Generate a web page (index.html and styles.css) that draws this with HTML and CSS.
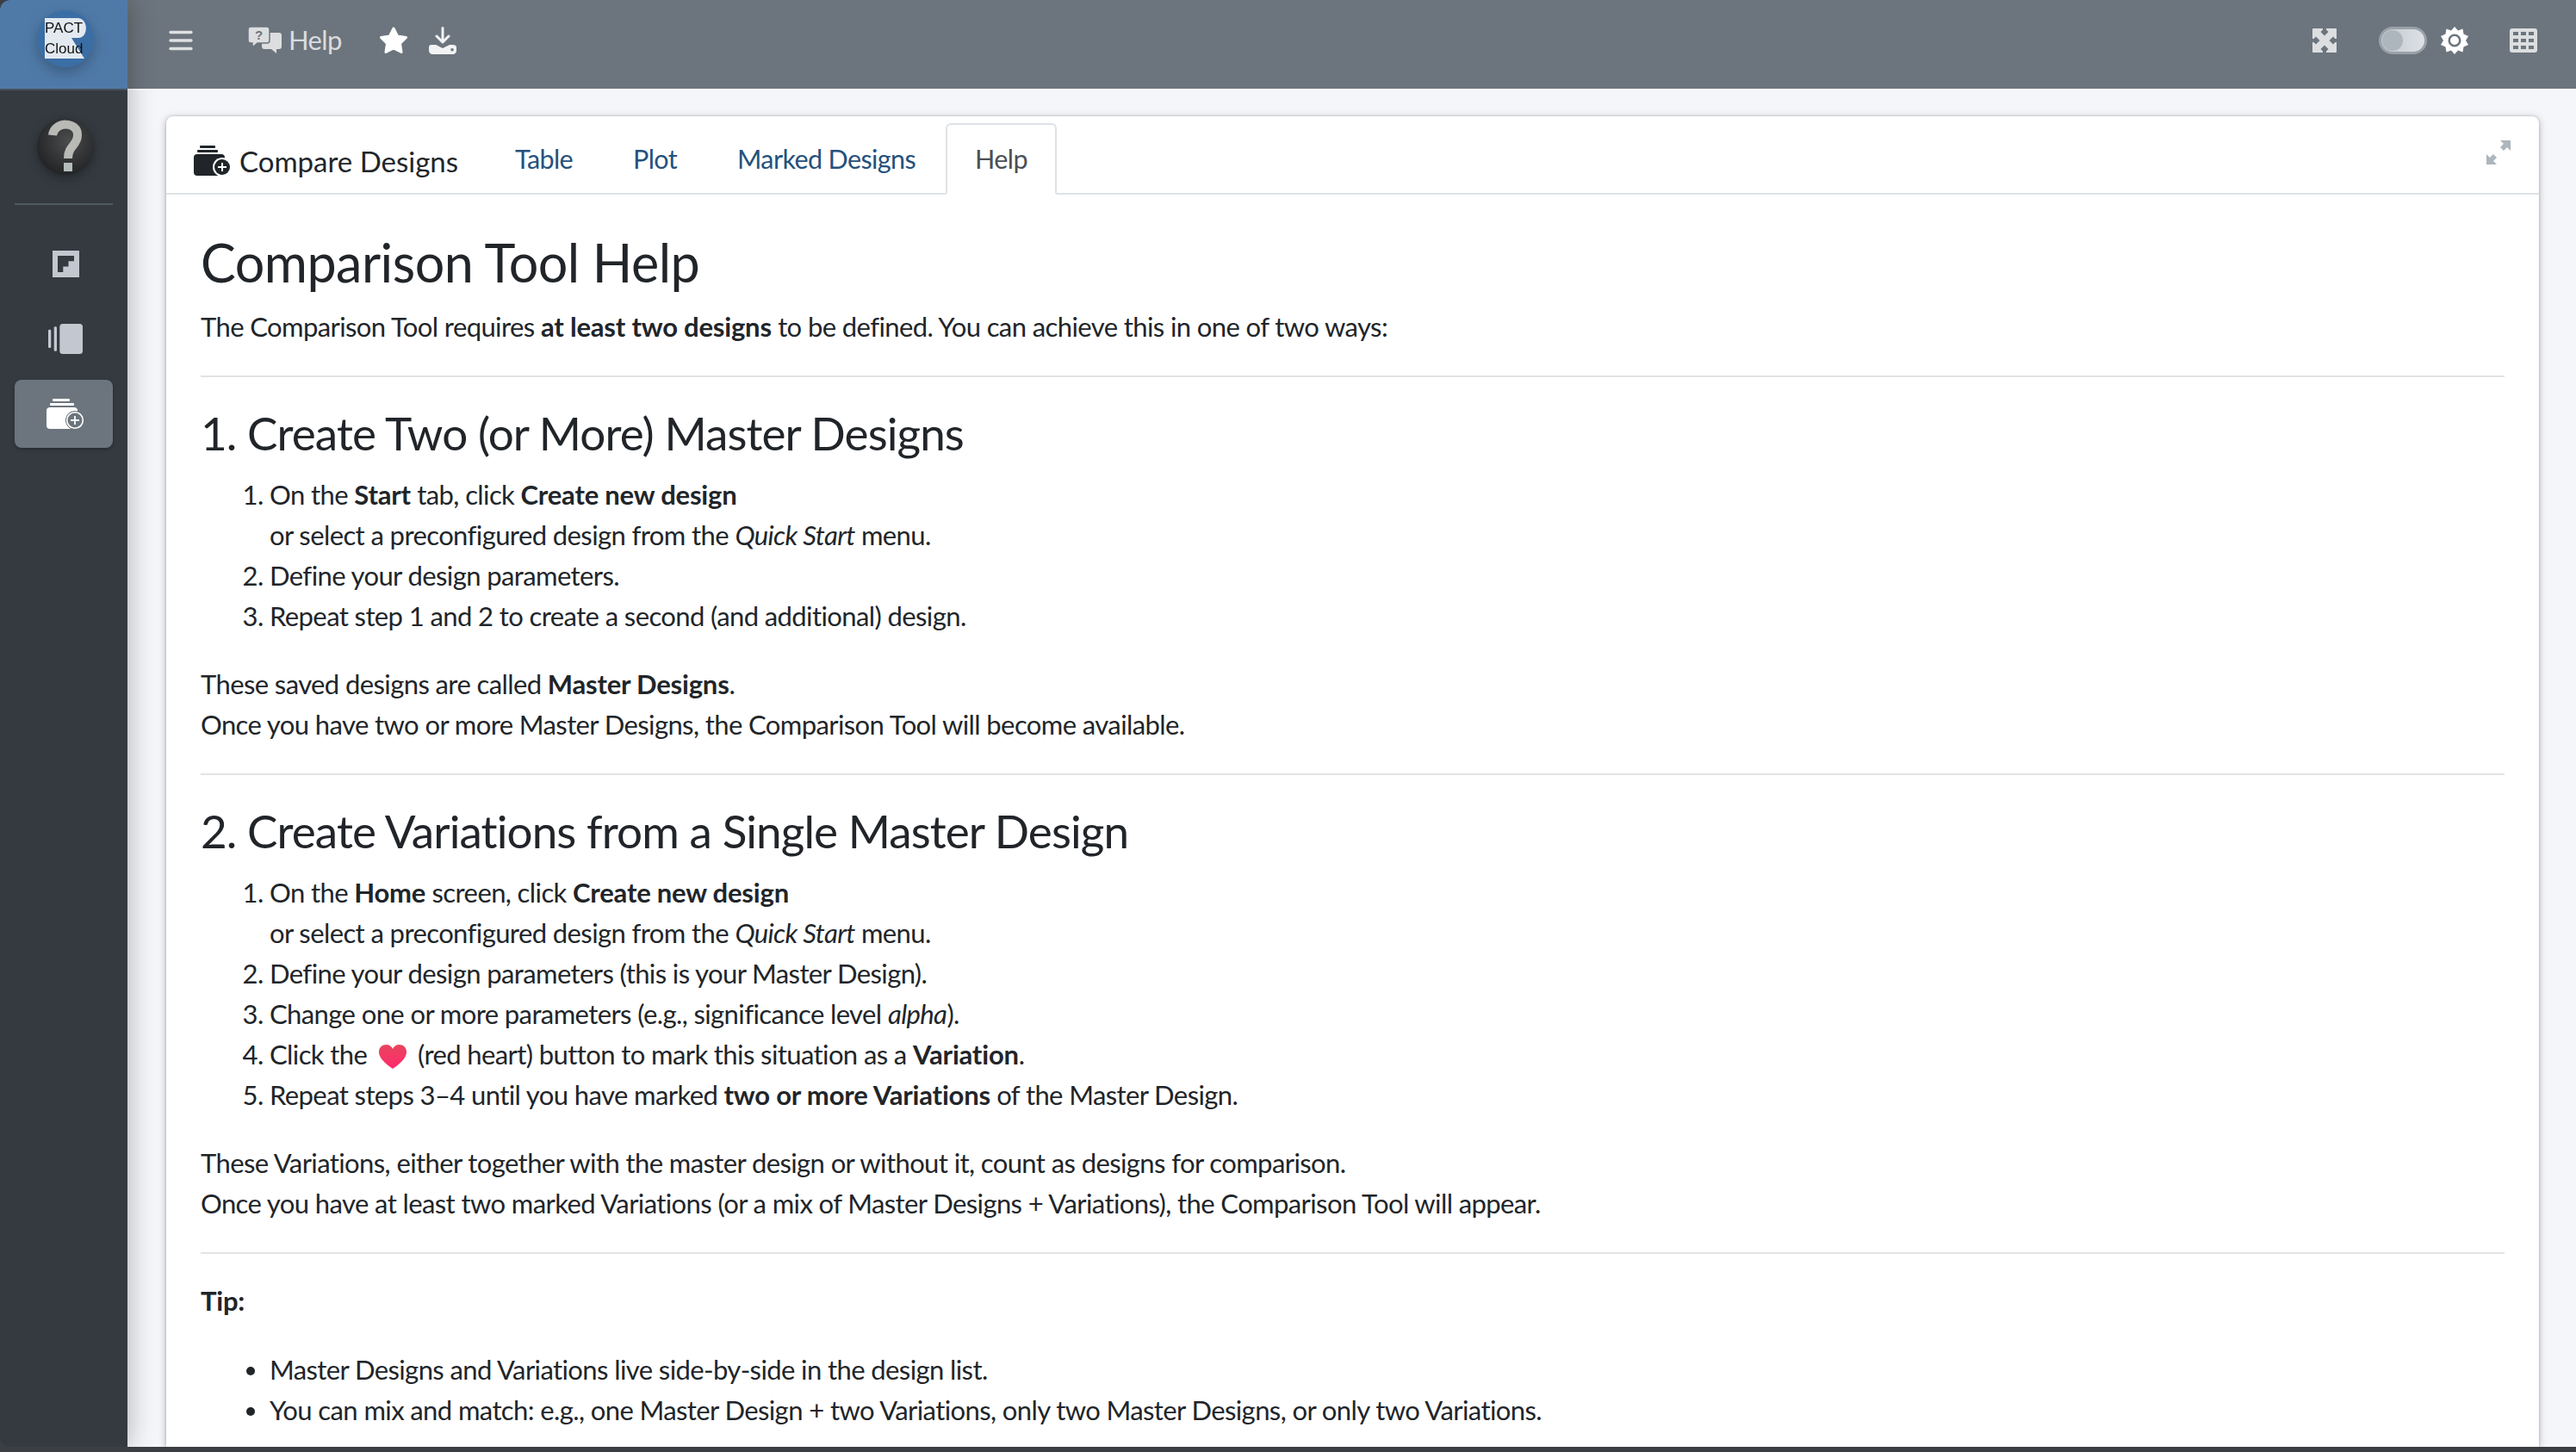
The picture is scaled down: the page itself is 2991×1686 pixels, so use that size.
FILE: index.html
```html
<!DOCTYPE html>
<html lang="en">

<head>
  <meta charset="UTF-8" />
  <title>PACT Cloud - Comparison Tool Help</title>
  <link rel="stylesheet" href="styles.css">
</head>

<body>
  <div class="app">
    <!-- Left sidebar -->
    <aside class="sidebar">
      <div class="brand">
        <svg class="brand-logo" viewBox="0 0 66 66">
          <circle cx="33" cy="33" r="33" fill="#3a6ea5" />
          <path d="M9 9H47C60 9 60 32 48 32H40L55 56H9Z" fill="#e3e9f0" />
          <text x="9" y="26" class="logo-text">PACT</text>
          <text x="9" y="50" class="logo-text">Cloud</text>
        </svg>
      </div>
      <div class="user-panel">
        <svg class="user-image" viewBox="0 0 66 66">
          <defs>
            <radialGradient id="ball" cx="55%" cy="40%" r="65%">
              <stop offset="0" stop-color="#4a4c4e" />
              <stop offset="1" stop-color="#1f2123" />
            </radialGradient>
          </defs>
          <circle cx="33" cy="33" r="33" fill="url(#ball)" />
          <path d="M18 20C20 3 48 4 47 20C47 32 36 32 36 47" fill="none" stroke="#b9b9b5" stroke-width="10" />
          <rect x="31" y="52" width="10" height="10" fill="#b5bcbc" />
        </svg>
      </div>
      <nav class="side-nav">
        <a class="side-link">
          <svg class="side-icon" viewBox="0 0 31 31">
            <path fill-rule="evenodd" d="M0 0H31V31H0ZM6 6V25H12.300V18.500H18.500V12.300H25V6Z" fill="#c2c7d0" />
          </svg>
        </a>
        <a class="side-link">
          <svg class="side-icon wide" viewBox="0 0 40 35">
            <rect x="0" y="6.700" width="3.300" height="21.300" rx="1.200" fill="#c2c7d0" />
            <rect x="6.700" y="3.300" width="3.300" height="28.400" rx="1.200" fill="#c2c7d0" />
            <rect x="13.300" y="0" width="26.700" height="35" rx="3.500" fill="#c2c7d0" />
          </svg>
        </a>
        <a class="side-link active">
          <svg class="side-icon compare" viewBox="0 0 44 36">
            <rect x="7" y="0" width="20" height="3" rx="1" fill="#fff" />
            <rect x="4" y="5" width="28" height="3" rx="1" fill="#fff" />
            <rect x="0" y="10" width="36" height="25" rx="4" fill="#fff" />
            <circle cx="33" cy="25" r="11" fill="#6c757d" />
            <circle cx="33" cy="25" r="9.300" fill="#6c757d" stroke="#fff" stroke-width="1.600" />
            <path d="M33 20V30M28 25H38" stroke="#fff" stroke-width="1.800" />
          </svg>
        </a>
      </nav>
    </aside>

    <div class="main">
      <!-- Top bar -->
      <header class="topbar">
        <div class="topbar-group">
          <svg class="icon-bars" viewBox="0 0 28 24">
            <path d="M2 2.500H26M2 12H26M2 21.500H26" stroke="#dee0e2" stroke-width="3.400" stroke-linecap="round" />
          </svg>
          <span class="help-link">
            <svg class="icon-comments" viewBox="0 0 39 31">
              <path d="M19 7H36C38 7 39 8 39 10V23C39 25 38 26 36 26H33V31L27 26H19C17 26 16 25 16 23V10C16 8 17 7 19 7Z" fill="#dcdee0" />
              <path d="M3 0H22C24 0 25 1 25 3V16C25 18 24 19 22 19H11L5 24V19H3C1 19 0 18 0 16V3C0 1 1 0 3 0Z" fill="#dcdee0" stroke="#6c757d" stroke-width="1.500" />
              <text x="8" y="15" class="qmark">?</text>
            </svg>
            Help
          </span>
          <svg class="icon-star" viewBox="0 0 34 32">
            <path d="M17 2L21.500 11L31.500 12.500L24.500 19.500L26 29.500L17 25L8 29.500L9.500 19.500L2.500 12.500L12.500 11Z" fill="#fff" stroke="#fff" stroke-width="3" stroke-linejoin="round" />
          </svg>
          <svg class="icon-download" viewBox="0 0 32 32">
            <path d="M16 1.500V17M9 11L16 18L23 11" fill="none" stroke="#f2f3f4" stroke-width="3" stroke-linecap="round" stroke-linejoin="round" />
            <path fill-rule="evenodd" d="M3 21H8L16 25L24 21H28C30 21 32 22 32 24V28C32 30 30 32 28 32H4C2 32 0 30 0 28V24C0 22 1 21 3 21ZM27 25A1.800 1.800 0 1 0 27.010 28.600A1.800 1.800 0 1 0 27 25Z" fill="#f2f3f4" />
          </svg>
        </div>
        <div class="topbar-group">
          <svg class="icon-arrows" viewBox="0 0 28 28">
            <path fill-rule="evenodd" d="M1 0H27C27.600 0 28 .4 28 1V27C28 27.600 27.600 28 27 28H1C.4 28 0 27.600 0 27V1C0 .4 .4 0 1 0ZM12 0V1.500L9.500 4L14 8.500L18.500 4L16 1.500V0ZM12 28V26.500L9.500 24L14 19.500L18.500 24L16 26.500V28ZM0 12H1.500L4 9.500L8.500 14L4 18.500L1.500 16H0ZM28 12H26.500L24 9.500L19.500 14L24 18.500L26.500 16H28Z" fill="#dcdee0" />
          </svg>
          <span class="toggle"><span class="toggle-knob"></span></span>
          <svg class="icon-sun" viewBox="0 0 32 32">
            <path fill-rule="evenodd" d="M16 0L20 4.500L25.500 2.500L26.500 8.500L32 11L29 16L32 21L26.500 23.500L25.500 29.500L20 27.500L16 32L12 27.500L6.500 29.500L5.500 23.500L0 21L3 16L0 11L5.500 8.500L6.500 2.500L12 4.500ZM16 8.500A7.500 7.500 0 1 0 16.010 23.500A7.500 7.500 0 1 0 16 8.500ZM16 11A5 5 0 1 1 15.990 21A5 5 0 1 1 16 11Z" fill="#fff" />
          </svg>
          <svg class="icon-grid" viewBox="0 0 32 28">
            <path fill-rule="evenodd" d="M3 0H29C31 0 32 1 32 3V25C32 27 31 28 29 28H3C1 28 0 27 0 25V3C0 1 1 0 3 0ZM4 4V8H10V4ZM13 4V8H19V4ZM22 4V8H28V4ZM4 12V16H10V12ZM13 12V16H19V12ZM22 12V16H28V12ZM4 20V24H10V20ZM13 20V24H19V20ZM22 20V24H28V20Z" fill="#dcdee0" />
          </svg>
        </div>
      </header>

      <!-- Content -->
      <section class="content">
        <div class="card">
          <div class="card-header">
            <h3 class="card-title">
              <svg class="icon-compare" viewBox="0 0 44 36">
                <rect x="7" y="0" width="18" height="3" rx="1" fill="#212529" />
                <rect x="4" y="5" width="24" height="3" rx="1" fill="#212529" />
                <rect x="0" y="10" width="36" height="25" rx="4" fill="#212529" />
                <circle cx="33" cy="25" r="11" fill="#fff" />
                <circle cx="33" cy="25" r="9" fill="#212529" />
                <path d="M33 20V30M28 25H38" stroke="#fff" stroke-width="2" />
              </svg>
              Compare Designs
            </h3>
            <ul class="nav-tabs">
              <li><a class="tab">Table</a></li>
              <li><a class="tab">Plot</a></li>
              <li><a class="tab">Marked Designs</a></li>
              <li><a class="tab active">Help</a></li>
            </ul>
            <svg class="icon-expand" viewBox="0 0 28 28">
              <path d="M16 0H28V12L24 8L20 12L16 8L20 4ZM0 28V16L4 20L8 16L12 20L8 24L12 28Z" fill="#adb5bd" />
            </svg>
          </div>

          <div class="card-body">
            <h2>Comparison Tool Help</h2>
            <p>The Comparison Tool requires <strong>at least two designs</strong> to be defined. You can achieve this in one of two ways:</p>
            <hr>

            <h3>1. Create Two (or More) Master Designs</h3>
            <ol>
              <li>On the <strong>Start</strong> tab, click <strong>Create new design</strong><br>or select a preconfigured design from the <em>Quick Start</em> menu.</li>
              <li>Define your design parameters.</li>
              <li>Repeat step 1 and 2 to create a second (and additional) design.</li>
            </ol>
            <p>These saved designs are called <strong>Master Designs</strong>.<br>Once you have two or more Master Designs, the Comparison Tool will become available.</p>
            <hr>

            <h3>2. Create Variations from a Single Master Design</h3>
            <ol>
              <li>On the <strong>Home</strong> screen, click <strong>Create new design</strong><br>or select a preconfigured design from the <em>Quick Start</em> menu.</li>
              <li>Define your design parameters (this is your Master Design).</li>
              <li>Change one or more parameters (e.g., significance level <em>alpha</em>).</li>
              <li>Click the
                <svg class="icon-heart" viewBox="0 0 32 28">
                  <defs>
                    <linearGradient id="heart" x1="0" y1="0" x2="0" y2="1">
                      <stop offset="0" stop-color="#e8455f" />
                      <stop offset="1" stop-color="#ff2a6d" />
                    </linearGradient>
                  </defs>
                  <path d="M16 28C6 21 0 15 0 8.500C0 3 4 0 8.500 0C12 0 15 2 16 5C17 2 20 0 23.500 0C28 0 32 3 32 8.500C32 15 26 21 16 28Z" fill="url(#heart)" />
                </svg>
                (red heart) button to mark this situation as a <strong>Variation</strong>.</li>
              <li>Repeat steps 3–4 until you have marked <strong>two or more Variations</strong> of the Master Design.</li>
            </ol>
            <p>These Variations, either together with the master design or without it, count as designs for comparison.<br>Once you have at least two marked Variations (or a mix of Master Designs + Variations), the Comparison Tool will appear.</p>
            <hr>

            <p><strong>Tip:</strong></p>
            <ul class="tips">
              <li>Master Designs and Variations live side-by-side in the design list.</li>
              <li>You can mix and match: e.g., one Master Design + two Variations, only two Master Designs, or only two Variations.</li>
            </ul>
          </div>
        </div>
      </section>
    </div>
  </div>
</body>

</html>
```

FILE: styles.css
```css
* {
  margin: 0;
  padding: 0;
  box-sizing: border-box;
}

html,
body {
  height: 100%;
  overflow: hidden;
}

body {
  background: #3b3e42;
  color: #212529;
  font-family: Lato, "Noto Sans", sans-serif;
  font-size: 31px;
  line-height: 47px;
  letter-spacing: -0.6px;
}

.app {
  display: flex;
  height: 1680px;
  overflow: hidden;
  border-radius: 12px 0 0 12px;
}

/* Sidebar */
.sidebar {
  width: 148px;
  flex-shrink: 0;
  background: #343a40;
  box-shadow: 0 0 30px rgba(0, 0, 0, 0.3);
  position: relative;
  z-index: 2;
}

.brand {
  height: 105px;
  background: #4f7aa8;
  border-bottom: 2px solid #47505a;
  padding: 12px 0 0 43px;
}

.brand-logo {
  display: block;
  width: 66px;
  height: 66px;
  filter: drop-shadow(0 6px 8px rgba(0, 0, 0, 0.25));
}

.logo-text {
  font-family: "Liberation Sans", sans-serif;
  font-size: 17px;
  letter-spacing: 0;
  fill: #111;
}

.qmark {
  font-family: "Liberation Sans", sans-serif;
  font-size: 15px;
  font-weight: 700;
  fill: #6c757d;
}

.user-panel {
  margin: 32px 17px 0;
  padding: 0 0 33px 26px;
  border-bottom: 2px solid #4f5962;
}

.user-image {
  display: block;
  width: 66px;
  height: 66px;
  filter: drop-shadow(0 4px 6px rgba(0, 0, 0, 0.3));
}

.side-nav {
  padding: 29px 17px 0;
  display: flex;
  flex-direction: column;
  gap: 8px;
}

.side-link {
  height: 79px;
  padding-left: 4px;
  border-radius: 8px;
  display: flex;
  justify-content: center;
  align-items: center;
}

.side-link.active {
  background: #6c757d;
  box-shadow: 0 2px 4px rgba(0, 0, 0, 0.25);
}

.side-icon {
  width: 31px;
  height: 31px;
}

.side-icon.wide {
  width: 40px;
  height: 35px;
}

.side-icon.compare {
  width: 44px;
  height: 36px;
}

/* Top bar */
.main {
  flex: 1;
  min-width: 0;
  display: flex;
  flex-direction: column;
  background: #f4f6f9;
}

.topbar {
  height: 105px;
  background: #6c757d;
  border-bottom: 2px solid #fff;
  display: flex;
  justify-content: space-between;
  align-items: center;
  padding: 0 45px 10px 48px;
  flex-shrink: 0;
}

.topbar-group {
  display: flex;
  align-items: center;
}

.icon-bars {
  width: 28px;
  height: 24px;
}

.help-link {
  display: flex;
  align-items: center;
  gap: 8px;
  margin-left: 64px;
  color: #d9dcdf;
}

.icon-comments {
  width: 39px;
  height: 31px;
}

.icon-star {
  width: 34px;
  height: 32px;
  margin-left: 43px;
}

.icon-download {
  width: 32px;
  height: 32px;
  margin-left: 24px;
}

.icon-arrows {
  width: 28px;
  height: 28px;
}

.toggle {
  width: 56px;
  height: 32px;
  margin-left: 49px;
  border-radius: 16px;
  background: linear-gradient(90deg, #c2c7cc, #dee2e6);
  border: 3px solid #99a1a9;
  padding: 1px;
  display: block;
}

.toggle-knob {
  display: block;
  width: 24px;
  height: 24px;
  border-radius: 50%;
  background: #adb5bd;
}

.icon-sun {
  width: 32px;
  height: 32px;
  margin-left: 16px;
}

.icon-grid {
  width: 32px;
  height: 28px;
  margin-left: 48px;
}

/* Card */
.content {
  flex: 1;
  padding: 30px 43px 0 45px;
  min-height: 0;
}

.card {
  background: #fff;
  border-radius: 8px 8px 0 0;
  box-shadow: 0 0 3px rgba(0, 0, 0, 0.2), 0 2px 10px rgba(0, 0, 0, 0.25);
  height: 100%;
  overflow: hidden;
}

.card-header {
  height: 91px;
  border-bottom: 2px solid #dee2e6;
  display: flex;
  align-items: flex-end;
  padding-left: 32px;
  position: relative;
}

.card-title {
  display: flex;
  align-items: center;
  gap: 9px;
  font-size: 33px;
  font-weight: 400;
  letter-spacing: 0;
  height: 84px;
  padding-top: 10px;
  width: 338px;
  white-space: nowrap;
}

.icon-compare {
  width: 44px;
  height: 36px;
}

.nav-tabs {
  display: flex;
  list-style: none;
  margin-bottom: -2px;
}

.tab {
  display: block;
  height: 83px;
  padding: 16px 33px 0;
  color: #25517c;
  border: 2px solid transparent;
  border-radius: 6px 6px 0 0;
  font-size: 30.5px;
  letter-spacing: -0.6px;
}

.tab.active {
  padding: 16px 32px 0;
  color: #495057;
  background: #fff;
  border-color: #dee2e6 #dee2e6 #fff;
}

.icon-expand {
  width: 28px;
  height: 28px;
  position: absolute;
  right: 33px;
  top: 28px;
}

.card-body {
  padding: 42px 40px 0;
}

.card-body h2 {
  font-size: 61px;
  font-weight: 400;
  line-height: 73px;
  letter-spacing: -0.5px;
  margin-bottom: 15px;
}

.card-body h3 {
  font-size: 53px;
  font-weight: 400;
  line-height: 64px;
  letter-spacing: -0.9px;
  padding-top: 2px;
  margin-bottom: 16px;
}

.card-body p {
  margin-bottom: 33px;
}

.card-body hr {
  border: 0;
  border-top: 2px solid #e3e3e3;
  margin: 0 0 31px;
}

.card-body ol,
.card-body ul {
  margin-bottom: 32px;
  padding-left: 80px;
}

.card-body strong {
  font-weight: 700;
  letter-spacing: -0.2px;
}

.icon-heart {
  width: 32px;
  height: 28px;
  margin: 0 6px;
  vertical-align: -5px;
}
```
